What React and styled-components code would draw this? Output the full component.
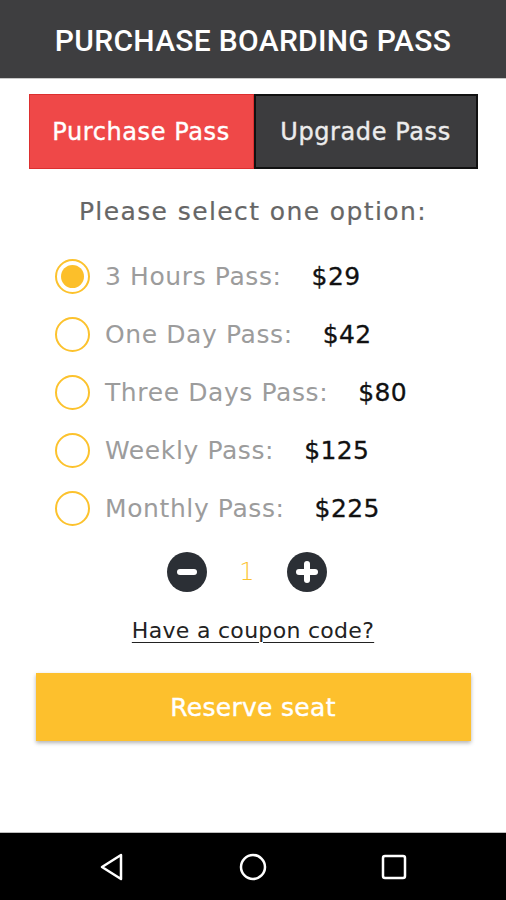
import React, { useState } from "react";
import styled, { createGlobalStyle } from "styled-components";

const Global = createGlobalStyle`
  html, body { margin: 0; padding: 0; background: #fff; }
  * { box-sizing: border-box; }
`;

const Screen = styled.div`
  width: 506px;
  height: 900px;
  display: flex;
  flex-direction: column;
  font-family: "DejaVu Sans", "Open Sans", sans-serif;
  background: #fff;
`;

const Header = styled.header`
  height: 79px;
  background: #3e3e40;
  border-bottom: 1px solid #c8c8c8;
  display: flex;
  align-items: center;
  justify-content: center;
  color: #fff;
  font-family: Roboto, "Liberation Sans", sans-serif;
  font-weight: 500;
  font-size: 30px;
  letter-spacing: 0.3px;
  padding-top: 2px;
`;

const Main = styled.main`
  flex: 1;
  display: flex;
  flex-direction: column;
  align-items: center;
  padding-top: 15px;
`;

const Tabs = styled.div`
  width: 449px;
  height: 75px;
  display: grid;
  grid-template-columns: 225px 224px;
`;

const Tab = styled.button`
  border: ${(p) => (p.$active ? "1px solid #dc2f2f" : "2px solid #111")};
  background: ${(p) => (p.$active ? "#ef4848" : "#3c3c3e")};
  color: ${(p) => (p.$active ? "#fff" : "#ececec")};
  font-family: inherit;
  font-size: 24px;
  letter-spacing: 0.6px;
  -webkit-text-stroke: 0.4px currentColor;
  padding: 0;
  cursor: pointer;
`;

const Prompt = styled.div`
  margin-top: 28px;
  font-size: 25px;
  color: #666;
  letter-spacing: 1.4px;
  -webkit-text-stroke: 0.2px currentColor;
`;

const Options = styled.div`
  margin-top: 21px;
  width: 100%;
  padding-left: 55px;
  display: flex;
  flex-direction: column;
`;

const Row = styled.label`
  height: 58px;
  display: flex;
  align-items: center;
  cursor: pointer;
`;

const Radio = styled.span`
  width: 35px;
  height: 35px;
  border-radius: 50%;
  border: 2px solid #fcc22d;
  display: flex;
  align-items: center;
  justify-content: center;
  flex-shrink: 0;
  &::after {
    content: "";
    width: 23px;
    height: 23px;
    border-radius: 50%;
    background: ${(p) => (p.$checked ? "#fcbf2a" : "transparent")};
  }
`;

const Label = styled.span`
  margin-left: 15px;
  font-size: 25px;
  color: #9c9c9c;
  letter-spacing: 0.6px;
`;

const Price = styled.span`
  margin-left: 30px;
  font-size: 25px;
  color: #111;
  letter-spacing: 0.4px;
  -webkit-text-stroke: 0.3px currentColor;
`;

const Stepper = styled.div`
  margin-top: 15px;
  margin-right: 12px;
  display: flex;
  align-items: center;
`;

const RoundBtn = styled.button`
  width: 40px;
  height: 40px;
  border-radius: 50%;
  border: none;
  background: #2b2f35;
  padding: 0;
  display: flex;
  align-items: center;
  justify-content: center;
  cursor: pointer;
`;

const Count = styled.span`
  width: 80px;
  text-align: center;
  font-size: 24px;
  color: #fcc22d;
  font-weight: 300;
`;

const Coupon = styled.a`
  margin-top: 26px;
  font-size: 22px;
  letter-spacing: 0.3px;
  color: #222;
  text-decoration: underline;
  text-underline-offset: 4px;
  text-decoration-thickness: 1px;
`;

const Reserve = styled.button`
  margin-top: 30px;
  width: 435px;
  height: 68px;
  border: none;
  background: #fdc02d;
  color: #fff;
  font-family: inherit;
  font-size: 25px;
  letter-spacing: 0.3px;
  -webkit-text-stroke: 0.4px currentColor;
  box-shadow: 0 2px 4px rgba(0, 0, 0, 0.3);
  cursor: pointer;
`;

const NavBar = styled.nav`
  height: 68px;
  background: #000;
  border-top: 1px solid #bdbdbd;
  display: grid;
  grid-template-columns: repeat(3, 1fr);
  align-items: center;
  justify-items: center;
  padding: 0 42px;
`;

const options = [
  ["3 Hours Pass:", "$29"],
  ["One Day Pass:", "$42"],
  ["Three Days Pass:", "$80"],
  ["Weekly Pass:", "$125"],
  ["Monthly Pass:", "$225"],
];

export default function App() {
  const [sel, setSel] = useState(0);
  const [count, setCount] = useState(1);
  return (
    <>
      <Global />
      <Screen>
        <Header>PURCHASE BOARDING PASS</Header>
        <Main>
          <Tabs>
            <Tab $active>Purchase Pass</Tab>
            <Tab>Upgrade Pass</Tab>
          </Tabs>
          <Prompt>Please select one option:</Prompt>
          <Options>
            {options.map(([l, p], i) => (
              <Row key={l} onClick={() => setSel(i)}>
                <Radio $checked={sel === i} />
                <Label>{l}</Label>
                <Price>{p}</Price>
              </Row>
            ))}
          </Options>
          <Stepper>
            <RoundBtn onClick={() => setCount(Math.max(1, count - 1))}>
              <svg width="20" height="6" viewBox="0 0 20 6">
                <rect x="0" y="0" width="20" height="6" rx="3" fill="#fff" />
              </svg>
            </RoundBtn>
            <Count>{count}</Count>
            <RoundBtn onClick={() => setCount(count + 1)}>
              <svg width="22" height="22" viewBox="0 0 22 22">
                <rect x="0" y="8" width="22" height="6" rx="3" fill="#fff" />
                <rect x="8" y="0" width="6" height="22" rx="3" fill="#fff" />
              </svg>
            </RoundBtn>
          </Stepper>
          <Coupon>Have a coupon code?</Coupon>
          <Reserve>Reserve seat</Reserve>
        </Main>
        <NavBar>
          <svg width="28" height="30" viewBox="0 0 28 30">
            <path d="M23 3 L4 15 L23 27 Z" fill="none" stroke="#fff" strokeWidth="2.5" strokeLinejoin="round" />
          </svg>
          <svg width="30" height="30" viewBox="0 0 30 30">
            <circle cx="15" cy="15" r="12" fill="none" stroke="#fff" strokeWidth="2.5" />
          </svg>
          <svg width="28" height="28" viewBox="0 0 28 28">
            <rect x="3" y="3" width="22" height="22" rx="2" fill="none" stroke="#fff" strokeWidth="2.5" />
          </svg>
        </NavBar>
      </Screen>
    </>
  );
}
